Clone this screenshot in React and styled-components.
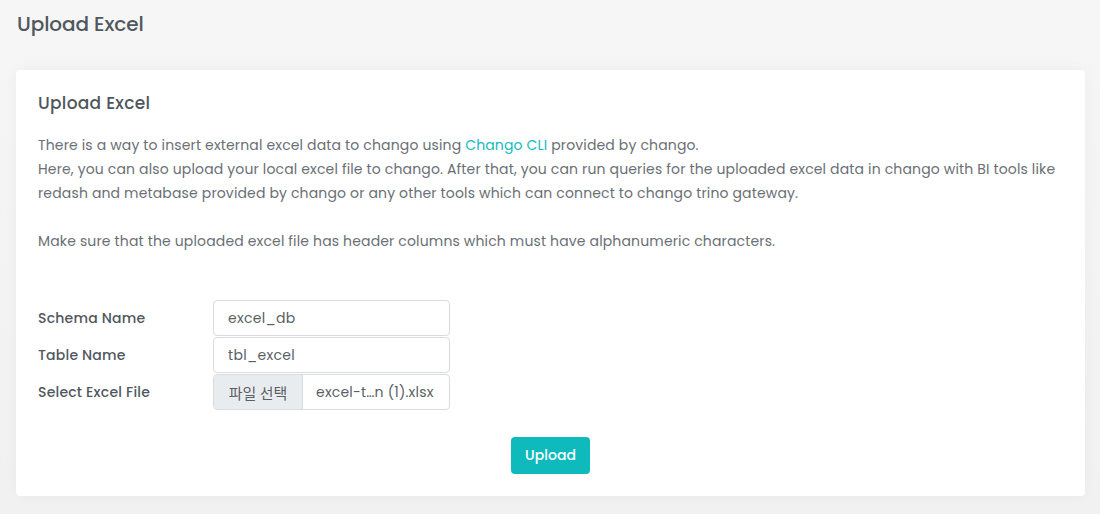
import React from "react";
import styled, { createGlobalStyle } from "styled-components";

const Global = createGlobalStyle`
  html, body { margin: 0; padding: 0; }
  body {
    background: #f2f2f2;
    font-family: "Poppins", "Inter", "Noto Sans", "Noto Sans CJK KR", sans-serif;
    color: #5f6368;
  }
  * { box-sizing: border-box; }
`;

const Page = styled.div`
  min-height: 514px;
  padding: 12px 15px 18px 16px;
  background: linear-gradient(180deg, #f6f6f6 0%, #f1f1f1 100%);
`;

const PageTitle = styled.h1`
  margin: 0 0 0 1px;
  height: 58px;
  font-size: 20px;
  font-weight: 500;
  line-height: 24px;
  color: #50575e;
  letter-spacing: -0.1px;
`;

const Card = styled.section`
  background: #ffffff;
  border-radius: 4px;
  box-shadow: 0 0 14px rgba(0, 0, 0, 0.04);
  padding: 21px 22px 22px 22px;
`;

const CardTitle = styled.h2`
  margin: 0 0 18px 0;
  font-size: 17px;
  font-weight: 500;
  line-height: 24px;
  letter-spacing: 0.3px;
  color: #4f565c;
`;

const Paragraph = styled.p`
  margin: 0 -10px 0 0;
  font-size: 14px;
  line-height: 24px;
  letter-spacing: 0.15px;
  color: #6a6f75;
  min-height: ${(p) => (p.$blank ? "24px" : "auto")};
`;

const Link = styled.a`
  color: #13bcc0;
  text-decoration: none;
`;

const Form = styled.div`
  margin-top: 47px;
  display: grid;
  grid-template-columns: 175px 237px;
  row-gap: 1px;
  align-items: center;
`;

const Label = styled.label`
  font-size: 14px;
  font-weight: 500;
  letter-spacing: 0.2px;
  color: #50575e;
`;

const TextInput = styled.div`
  height: 36px;
  border: 1px solid #d8dbe0;
  border-radius: 4px;
  padding: 0 14px;
  display: flex;
  align-items: center;
  font-size: 14px;
  letter-spacing: 0.3px;
  color: #5a5f65;
`;

const FileInput = styled.div`
  height: 36px;
  border: 1px solid #d8dbe0;
  border-radius: 4px;
  display: flex;
  overflow: hidden;
  font-size: 14px;
  letter-spacing: 0.2px;
  color: #5a5f65;
`;

const FileButton = styled.span`
  width: 89px;
  background: #e9ecef;
  border-right: 1px solid #d8dbe0;
  display: flex;
  align-items: center;
  justify-content: center;
  font-family: "Noto Sans CJK KR", sans-serif;
  font-size: 15px;
  letter-spacing: 0;
  color: #5a5f65;
`;

const FileName = styled.span`
  flex: 1;
  display: flex;
  align-items: center;
  padding-left: 13px;
  white-space: nowrap;
`;

const Actions = styled.div`
  display: flex;
  justify-content: center;
  margin-top: 27px;
`;

const Button = styled.button`
  width: 79px;
  height: 37px;
  border: none;
  border-radius: 4px;
  background: #0fbabd;
  color: #ffffff;
  font-family: inherit;
  font-size: 14px;
  font-weight: 500;
  cursor: pointer;
`;

export default function App() {
  return (
    <>
      <Global />
      <Page>
        <PageTitle>Upload Excel</PageTitle>
        <Card>
          <CardTitle>Upload Excel</CardTitle>
          <Paragraph>
            There is a way to insert external excel data to chango using{" "}
            <Link href="#">Chango CLI</Link> provided by chango.
          </Paragraph>
          <Paragraph>
            Here, you can also upload your local excel file to chango. After that, you can run queries for the
            uploaded excel data in chango with BI tools like redash and metabase provided by chango or any other
            tools which can connect to chango trino gateway.
          </Paragraph>
          <Paragraph $blank />
          <Paragraph>
            Make sure that the uploaded excel file has header columns which must have alphanumeric characters.
          </Paragraph>
          <Form>
            <Label>Schema Name</Label>
            <TextInput>excel_db</TextInput>
            <Label>Table Name</Label>
            <TextInput>tbl_excel</TextInput>
            <Label>Select Excel File</Label>
            <FileInput>
              <FileButton>파일 선택</FileButton>
              <FileName>excel-t…n (1).xlsx</FileName>
            </FileInput>
          </Form>
          <Actions>
            <Button>Upload</Button>
          </Actions>
        </Card>
      </Page>
    </>
  );
}
